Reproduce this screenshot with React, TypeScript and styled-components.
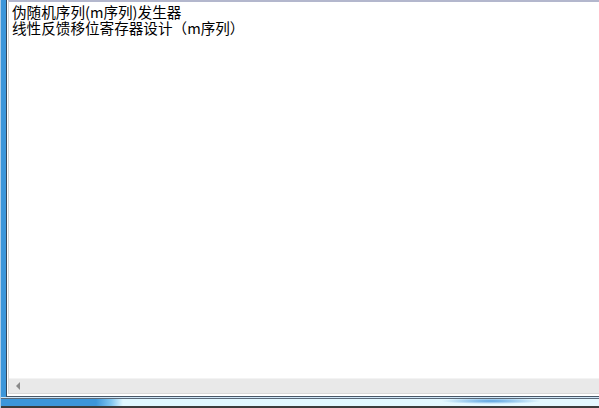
import styled, {createGlobalStyle} from "styled-components";

const FRAME_BLUE = "#3c96da";
const LINE_HEIGHT = 16;

const GlobalStyle = createGlobalStyle`
    html, body {
        margin: 0;
        padding: 0;
        background: #ffffff;
    }
`;

const Frame = styled.div`
    width: 599px;
    height: 408px;
    box-sizing: border-box;
    display: flex;
    flex-direction: column;
    background-color: ${FRAME_BLUE};
    border-left: 1px solid #a9cbe8;
    overflow: hidden;
`;

const Body = styled.div`
    flex: 1;
    display: flex;
    min-height: 0;
    padding-left: 5px;
    border-bottom: 1px solid #cfe6f7;
`;

const Client = styled.div`
    flex: 1;
    display: flex;
    flex-direction: column;
    min-width: 0;
    background: #ffffff;
    border-left: 1px solid #34485c;
    border-bottom: 1px solid #4a5868;
`;

const Edit = styled.div`
    flex: 1;
    display: flex;
    flex-direction: column;
    min-height: 0;
    margin-left: 1px;
    margin-bottom: 2px;
    border-left: 1px solid #d6d6d6;
    border-top: 2px solid #b3b7cd;
    border-bottom: 1px solid #d9d9d9;
`;

const TextArea = styled.div`
    flex: 1;
    padding: 2px 0 0 3px;
    font-family: "Noto Sans CJK SC", "DejaVu Sans", sans-serif;
    font-size: 14.6px;
    line-height: ${LINE_HEIGHT}px;
    color: #000000;
    white-space: pre;
`;

const Line = styled.div`
    height: ${LINE_HEIGHT}px;
`;

const HScrollBar = styled.div`
    height: 14px;
    display: flex;
    align-items: center;
    background: #e9e9e9;
    border-top: 1px solid #f3f3f3;
    padding-left: 7px;
`;

const ArrowLeft = styled.span`
    width: 0;
    height: 0;
    border-top: 4px solid transparent;
    border-bottom: 4px solid transparent;
    border-right: 4px solid #8a8a8a;
`;

const BottomStrip = styled.div`
    height: 7px;
    border-bottom: 2px solid #3c3c3c;
    background:
        radial-gradient(ellipse 50px 3px at 490px 2px, rgba(70, 150, 220, 0.9), rgba(70, 150, 220, 0) 100%),
        linear-gradient(to right, ${FRAME_BLUE} 0, ${FRAME_BLUE} 95px, #7fc6f0 110px, #dff7ff 122px, #e4f8ff 100%);
    border-top: 1px solid #5a6878;
`;

const lines = ["伪随机序列(m序列)发生器", "线性反馈移位寄存器设计（m序列）"];

export default function App() {
    return (
        <>
            <GlobalStyle />
            <Frame>
                <Body>
                    <Client>
                        <Edit>
                            <TextArea>
                                {lines.map((line, index) => (
                                    <Line key={index}>{line}</Line>
                                ))}
                            </TextArea>
                            <HScrollBar>
                                <ArrowLeft />
                            </HScrollBar>
                        </Edit>
                    </Client>
                </Body>
                <BottomStrip />
            </Frame>
        </>
    );
}
